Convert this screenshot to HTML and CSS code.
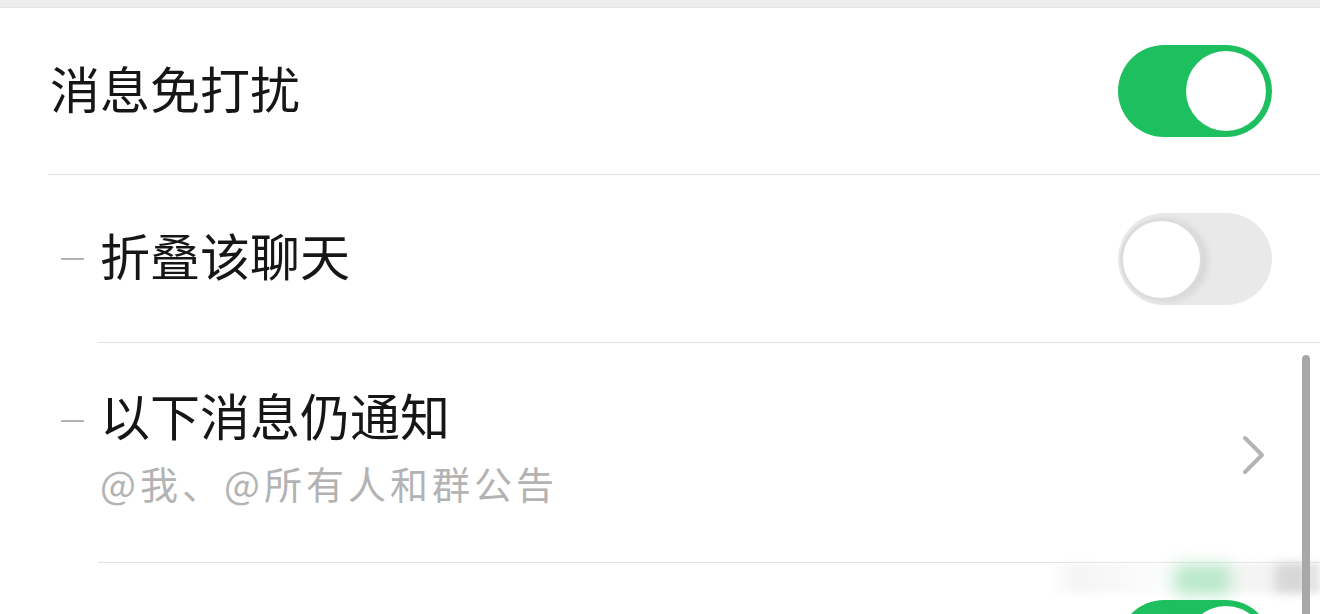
FILE: index.html
```html
<!DOCTYPE html>
<html lang="zh-CN">
<head>
<meta charset="utf-8">
<title>聊天设置</title>
<link rel="stylesheet" href="styles.css">
</head>
<body>
<div class="page">
  <div class="top-band"></div>
  <section class="group">
    <div class="row row-main">
      <div class="label">消息免打扰</div>
      <div class="switch on"><span class="knob"></span></div>
    </div>
    <div class="divider divider-main"></div>
    <div class="row row-sub">
      <span class="dash"></span>
      <div class="label">折叠该聊天</div>
      <div class="switch off"><span class="knob"></span></div>
    </div>
    <div class="divider divider-sub"></div>
    <div class="row row-sub row-tall">
      <span class="dash dash-top"></span>
      <div class="texts">
        <div class="label">以下消息仍通知</div>
        <div class="hint">@我、@所有人和群公告</div>
      </div>
      <svg class="chevron" width="24" height="40" viewBox="0 0 24 40">
        <polyline points="3,3 20,20 3,37" fill="none" stroke="#b4b4b4" stroke-width="4" stroke-linecap="round" stroke-linejoin="round"/>
      </svg>
    </div>
    <div class="divider divider-sub"></div>
    <div class="row row-main">
      <div class="label"></div>
      <div class="switch on"><span class="knob"></span></div>
    </div>
  </section>
  <div class="haze"><span class="haze-green"></span><span class="haze-grey"></span></div>
  <div class="scrollbar"></div>
</div>
</body>
</html>
```
FILE: styles.css
```css
html, body {
  margin: 0;
  padding: 0;
  background: #ffffff;
}

body {
  font-family: "Noto Sans CJK SC", "Noto Sans", sans-serif;
  color: #161616;
  overflow: hidden;
}

.page {
  position: relative;
  width: 1320px;
  height: 614px;
  overflow: hidden;
}

.top-band {
  height: 7px;
  background: #ededed;
  border-bottom: 1px solid #e2e2e2;
}

.group {
  display: flex;
  flex-direction: column;
}

.row {
  display: flex;
  align-items: center;
  height: 166px;
  padding-right: 48px;
}

.row-main {
  padding-left: 50px;
}

.row-sub {
  padding-left: 61px;
  height: 167px;
}

.row-tall {
  height: 219px;
  align-items: center;
}

.label {
  flex: 1;
  font-size: 50px;
  line-height: 60px;
  color: #161616;
}

.row-main .label {
  margin-top: -9px;
}

.row-sub .label {
  margin-top: -10px;
}

.dash {
  width: 23px;
  height: 2px;
  background: #b3b3b3;
  margin-right: 16px;
  flex: none;
  align-self: center;
  margin-top: 0;
}

.row-tall .dash-top {
  align-self: flex-start;
  margin-top: 77px;
}

.texts {
  flex: 1;
  display: flex;
  flex-direction: column;
  margin-top: -14px;
}

.texts .label {
  flex: none;
  margin-top: 0;
}

.hint {
  font-size: 38px;
  line-height: 48px;
  letter-spacing: 4px;
  color: #b3b3b3;
  margin-top: 15px;
}

.chevron {
  flex: none;
  margin-right: 6px;
  margin-top: 4px;
}

.divider {
  height: 1px;
  background: #e3e3e3;
}

.divider-main {
  margin-left: 48px;
}

.divider-sub {
  margin-left: 98px;
}

.switch {
  flex: none;
  position: relative;
  width: 154px;
  height: 92px;
  border-radius: 46px;
  box-sizing: border-box;
}

.switch.on {
  background: #1dbf5e;
}

.switch.off {
  background: #e9e9e9;
}

.knob {
  position: absolute;
  top: 6px;
  width: 80px;
  height: 80px;
  border-radius: 50%;
  background: #ffffff;
}

.switch.on .knob {
  right: 6px;
}

.switch.off .knob {
  left: 2px;
  top: 5px;
  width: 83px;
  height: 83px;
  box-sizing: border-box;
  border: 3px solid #dcdcdc;
  box-shadow: 5px 1px 7px rgba(0, 0, 0, 0.08);
}

/* soft smudge over the lower right corner */
.haze {
  position: absolute;
  left: 1050px;
  top: 563px;
  width: 270px;
  height: 30px;
  background: linear-gradient(90deg, rgba(255,255,255,0) 0%, rgba(238,238,238,0.6) 10%, rgba(250,250,250,0.6) 40%, rgba(236,236,236,0.7) 85%, rgba(220,220,220,0.8) 100%);
  filter: blur(3px);
}

.haze-green {
  position: absolute;
  left: 125px;
  top: 2px;
  width: 55px;
  height: 30px;
  background: rgba(60, 200, 110, 0.35);
  filter: blur(8px);
}

.haze-grey {
  position: absolute;
  left: 225px;
  top: 0;
  width: 30px;
  height: 30px;
  background: rgba(200, 200, 200, 0.6);
  filter: blur(4px);
}

.scrollbar {
  position: absolute;
  left: 1302px;
  top: 355px;
  width: 8px;
  height: 300px;
  border-radius: 4px;
  background: #a8a8a8;
}
```
